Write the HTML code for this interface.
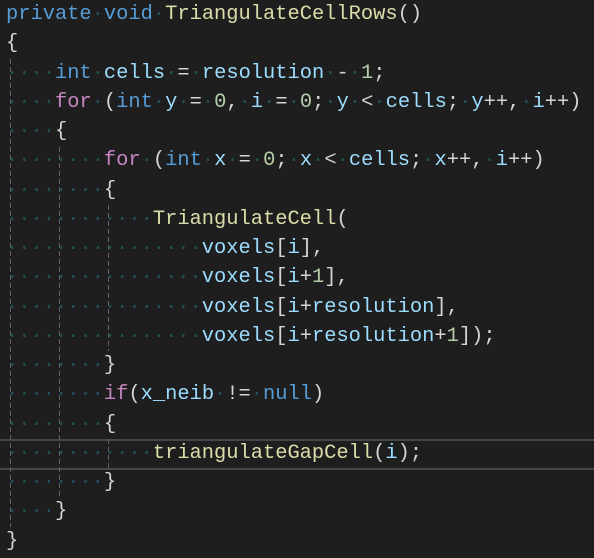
<!DOCTYPE html>
<html><head><meta charset="utf-8"><style>
html,body{margin:0;padding:0;background:#1e1e1e;width:594px;height:558px;overflow:hidden}
pre{margin:0;position:absolute;left:6px;top:0;font-family:"Liberation Mono",monospace;font-size:20.4px;line-height:29.25px;color:#d4d4d4}
i{font-style:normal;color:#1f4f57}
b{font-weight:normal;color:#569cd6}
u{text-decoration:none;color:#c586c0}
em{font-style:normal;color:#dcdcaa}
s{text-decoration:none;color:#9cdcfe}
q{color:#b5cea8}q:before,q:after{content:none}
.g{position:absolute;width:1px;background:repeating-linear-gradient(to bottom,#606060 0 5px,transparent 5px 8px)}
.cur{position:absolute;left:0;width:594px;top:439px;height:27px;border-top:2px solid #464646;border-bottom:2px solid #464646}
</style></head><body>
<div class="cur"></div>
<div class="g" style="left:10px;top:59px;height:468px"></div>
<div class="g" style="left:59px;top:147px;height:351px"></div>
<div class="g" style="left:108px;top:205px;height:146px"></div>
<div class="g" style="left:108px;top:439px;height:29px"></div>
<pre><b>private</b><i>·</i><b>void</b><i>·</i><em>TriangulateCellRows</em>()
{
<i>····</i><b>int</b><i>·</i><s>cells</s><i>·</i>=<i>·</i><s>resolution</s><i>·</i>-<i>·</i><q>1</q>;
<i>····</i><u>for</u><i>·</i>(<b>int</b><i>·</i><s>y</s><i>·</i>=<i>·</i><q>0</q>,<i>·</i><s>i</s><i>·</i>=<i>·</i><q>0</q>;<i>·</i><s>y</s><i>·</i>&lt;<i>·</i><s>cells</s>;<i>·</i><s>y</s>++,<i>·</i><s>i</s>++)
<i>····</i>{
<i>········</i><u>for</u><i>·</i>(<b>int</b><i>·</i><s>x</s><i>·</i>=<i>·</i><q>0</q>;<i>·</i><s>x</s><i>·</i>&lt;<i>·</i><s>cells</s>;<i>·</i><s>x</s>++,<i>·</i><s>i</s>++)
<i>········</i>{
<i>············</i><em>TriangulateCell</em>(
<i>················</i><s>voxels</s>[<s>i</s>],
<i>················</i><s>voxels</s>[<s>i</s>+<q>1</q>],
<i>················</i><s>voxels</s>[<s>i</s>+<s>resolution</s>],
<i>················</i><s>voxels</s>[<s>i</s>+<s>resolution</s>+<q>1</q>]);
<i>········</i>}
<i>········</i><u>if</u>(<s>x_neib</s><i>·</i>!=<i>·</i><b>null</b>)
<i>········</i>{
<i>············</i><em>triangulateGapCell</em>(<s>i</s>);
<i>········</i>}
<i>····</i>}
}</pre>
</body></html>
